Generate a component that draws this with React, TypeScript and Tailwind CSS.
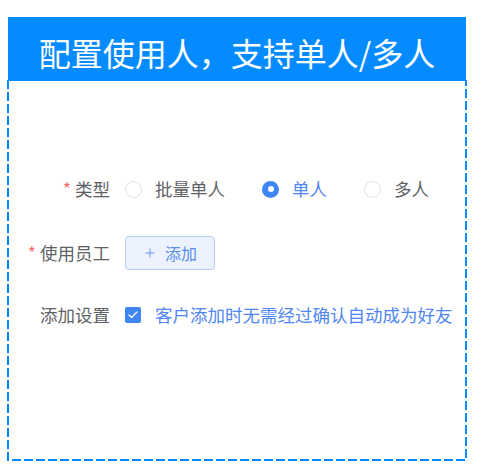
import { Plus, Check } from "lucide-react";

const font = { fontFamily: '"Noto Sans CJK SC", "Noto Sans", sans-serif' };

function Radio({ label, checked }: { label: string; checked?: boolean }) {
  return (
    <label className="flex items-center shrink-0 whitespace-nowrap mr-[37px] cursor-pointer">
      {checked ? (
        <span className="shrink-0 w-[17px] h-[17px] rounded-full bg-[#3f86f4] flex items-center justify-center">
          <span className="w-[6px] h-[6px] rounded-full bg-white" />
        </span>
      ) : (
        <span className="shrink-0 w-[17px] h-[17px] rounded-full border border-[#dcdfe6] bg-white" />
      )}
      <span className={`ml-[13px] ${checked ? "text-[#4f86f2]" : "text-[#606266]"}`}>{label}</span>
    </label>
  );
}

export default function App() {
  return (
    <div className="bg-white w-[479px] h-[468px] pt-[17px] pl-[7px]" style={font}>
      <div className="w-[460px]">
        {/* Title bar */}
        <div className="mx-[1px] h-[64px] bg-[#038bff] flex items-center justify-center pt-[6px] text-white text-[32px] leading-none">
          配置使用人，支持单人/多人
        </div>

        {/* Dashed body */}
        <div className="relative h-[381px] -mt-[1px] pt-[92px] text-[17.5px] leading-none whitespace-nowrap">
          {/* dashed outline */}
          <svg className="absolute inset-0 pointer-events-none" width="460" height="381">
            <path
              d="M1 0 V380 H459 V0"
              fill="none"
              stroke="#038bff"
              strokeWidth="2"
              strokeDasharray="9 3"
            />
          </svg>

          {/* Type */}
          <div className="flex items-center h-[34px] mb-[30px] pl-[2px]">
            <div className="w-[101px] shrink-0 text-right text-[#606266]">
              <span className="text-[#f56c6c] mr-[4px]">*</span>类型
            </div>
            <div className="flex items-center ml-[15px]">
              <Radio label="批量单人" />
              <Radio label="单人" checked />
              <Radio label="多人" />
            </div>
          </div>

          {/* Staff */}
          <div className="flex items-center h-[34px] mb-[28px] pl-[2px]">
            <div className="w-[101px] shrink-0 text-right text-[#606266]">
              <span className="text-[#f56c6c] mr-[4px]">*</span>使用员工
            </div>
            <button className="ml-[15px] w-[90px] h-[34px] rounded-[4px] border border-[#b3cdf7] bg-[#ecf3fe] text-[#5a8cf0] flex items-center justify-center gap-[8px] text-[16px]">
              <Plus size={14} strokeWidth={1.5} />
              <span>添加</span>
            </button>
          </div>

          {/* Setting */}
          <div className="flex items-center h-[34px] pl-[2px]">
            <div className="w-[101px] shrink-0 text-right text-[#606266]">添加设置</div>
            <div className="ml-[15px] flex items-center">
              <span className="shrink-0 w-[16px] h-[16px] rounded-[2px] bg-[#3f86f4] flex items-center justify-center">
                <Check size={12} strokeWidth={2.5} className="text-white" />
              </span>
              <span className="ml-[14px] text-[#4f86f2]">客户添加时无需经过确认自动成为好友</span>
            </div>
          </div>
        </div>
      </div>
    </div>
  );
}
